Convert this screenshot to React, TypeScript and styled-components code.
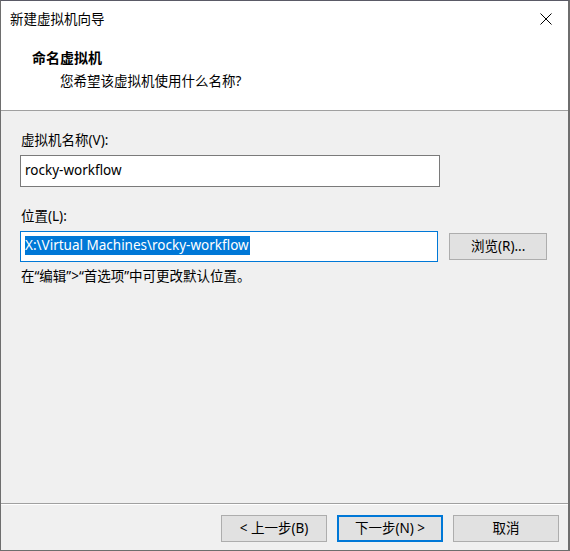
import React from "react";
import styled, { createGlobalStyle } from "styled-components";

const Global = createGlobalStyle`
  html, body { margin: 0; padding: 0; background: #f0f0f0; }
  body {
    font-family: "Segoe UI", "Noto Sans", "Noto Sans CJK SC", sans-serif;
    font-size: 13.5px;
    color: #000;
  }
`;

const Window = styled.div`
  box-sizing: border-box;
  width: 570px;
  height: 551px;
  display: flex;
  flex-direction: column;
  border-left: 1px solid #6e6e6e;
  border-right: 2px solid #6e6e6e;
  border-bottom: 1px solid #6e6e6e;
  border-top: 1px solid #5a5a66;
  background: #f0f0f0;
`;

const TitleBar = styled.div`
  height: 37px;
  display: flex;
  align-items: center;
  justify-content: space-between;
  background: #fff;
  padding-left: 9px;
  padding-right: 10px;
  font-size: 13.5px;
`;

const TitleText = styled.span`
  line-height: 1;
`;

const CloseButton = styled.div`
  width: 24px;
  height: 24px;
  display: flex;
  align-items: center;
  justify-content: center;
  margin-top: -2px;
`;

const Header = styled.div`
  height: 73px;
  background: #fff;
  border-bottom: 1px solid #a0a0a0;
  box-sizing: border-box;
  display: flex;
  flex-direction: column;
  padding-top: 10px;
`;

const HeaderTitle = styled.div`
  font-weight: 700;
  font-size: 14px;
  padding-left: 31px;
  line-height: 20px;
`;

const HeaderSub = styled.div`
  padding-left: 59px;
  line-height: 20px;
  margin-top: 3px;
`;

const Body = styled.div`
  flex: 1;
  padding: 19px 21px 0 19px;
  display: flex;
  flex-direction: column;
`;

const Label = styled.div<{ $top: number }>`
  padding-left: 1px;
  line-height: 20px;
  margin-top: ${(p) => p.$top}px;
`;

const Row = styled.div`
  display: flex;
  align-items: center;
  gap: 11px;
  margin-top: 5px;
`;

const TextBox = styled.div<{ $focused?: boolean }>`
  box-sizing: border-box;
  width: 420px;
  height: ${(p) => (p.$focused ? 31 : 32)}px;
  background: #fff;
  border: 1px solid ${(p) => (p.$focused ? "#0078d7" : "#7a7a7a")};
  padding: 0 4px 2px 4px;
  display: flex;
  align-items: center;
  white-space: nowrap;
  line-height: 20px;
`;

const Selected = styled.span`
  background: #0078d7;
  color: #fff;
  padding: 0 1px 0 0;
  line-height: 19px;
`;

const Hint = styled.div`
  margin-top: 4px;
  padding-left: 1px;
  line-height: 20px;
`;

const Button = styled.button<{ $default?: boolean; $w?: number }>`
  box-sizing: border-box;
  width: ${(p) => p.$w ?? 106}px;
  height: 27px;
  font: inherit;
  font-size: 13.5px;
  color: #000;
  background: #e1e1e1;
  border: ${(p) => (p.$default ? "2px solid #0078d7" : "1px solid #adadad")};
  padding: 0;
  display: flex;
  align-items: center;
  justify-content: center;
  line-height: 1;
`;

const Footer = styled.div`
  height: 47px;
  border-top: 1px solid #a0a0a0;
  box-shadow: inset 0 1px 0 #fff;
  display: flex;
  align-items: flex-start;
  justify-content: flex-end;
  gap: 10px;
  padding-top: 11px;
  padding-right: 9px;
  box-sizing: border-box;
`;

export default function App() {
  return (
    <>
      <Global />
      <Window>
        <TitleBar>
          <TitleText>新建虚拟机向导</TitleText>
          <CloseButton>
            <svg width="12" height="12" viewBox="0 0 12 12">
              <path d="M0.5 0.5 L11.5 11.5 M11.5 0.5 L0.5 11.5" stroke="#000" strokeWidth="1" fill="none" />
            </svg>
          </CloseButton>
        </TitleBar>
        <Header>
          <HeaderTitle>命名虚拟机</HeaderTitle>
          <HeaderSub>您希望该虚拟机使用什么名称?</HeaderSub>
        </Header>
        <Body>
          <Label $top={0}>虚拟机名称(V):</Label>
          <Row>
            <TextBox>rocky-workflow</TextBox>
          </Row>
          <Label $top={19}>位置(L):</Label>
          <Row>
            <TextBox $focused>
              <Selected>X:\Virtual Machines\rocky-workflow</Selected>
            </TextBox>
            <Button $w={98}>浏览(R)...</Button>
          </Row>
          <Hint>在“编辑”&gt;“首选项”中可更改默认位置。</Hint>
        </Body>
        <Footer>
          <Button>&lt; 上一步(B)</Button>
          <Button $default>下一步(N) &gt;</Button>
          <Button>取消</Button>
        </Footer>
      </Window>
    </>
  );
}
